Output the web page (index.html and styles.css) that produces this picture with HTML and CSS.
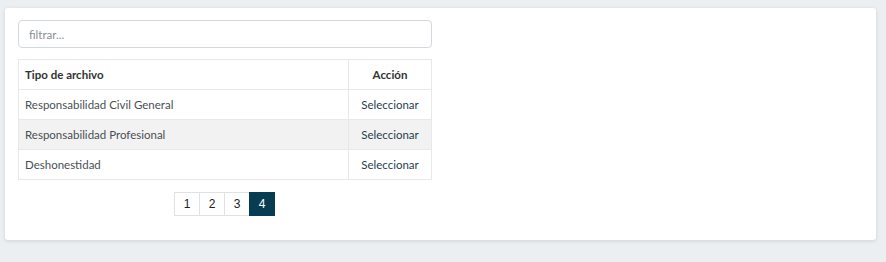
FILE: index.html
```html
<!DOCTYPE html>
<html lang="es">
<head>
<meta charset="utf-8">
<link rel="stylesheet" href="styles.css">
</head>
<body>
<div class="card">
  <div class="panel">
    <input class="filter" type="text" placeholder="filtrar...">
    <table class="grid">
      <thead>
        <tr><th class="col-tipo">Tipo de archivo</th><th class="col-accion">Acción</th></tr>
      </thead>
      <tbody>
        <tr><td>Responsabilidad Civil General</td><td class="col-accion"><a href="#">Seleccionar</a></td></tr>
        <tr class="alt"><td>Responsabilidad Profesional</td><td class="col-accion"><a href="#">Seleccionar</a></td></tr>
        <tr><td>Deshonestidad</td><td class="col-accion"><a href="#">Seleccionar</a></td></tr>
      </tbody>
    </table>
    <div class="pager">
      <a class="page" href="#">1</a><a class="page" href="#">2</a><a class="page" href="#">3</a><a class="page active" href="#">4</a>
    </div>
  </div>
</div>
</body>
</html>
```
FILE: styles.css
```css
html, body { margin: 0; padding: 0; }
body {
  background: #ebeff2;
  font-family: Lato, "Open Sans", sans-serif;
  font-size: 11.5px;
  color: #4a4f55;
  padding: 8px 10px 0 5px;
  height: 262px;
  box-sizing: border-box;
}
.card {
  background: #fff;
  border-radius: 3px;
  box-shadow: 0 1px 4px rgba(0,0,0,0.12);
  height: 232px;
  box-sizing: border-box;
  padding: 12px 13px;
}
.panel { width: 414px; }
.filter {
  display: block;
  width: 100%;
  height: 28px;
  box-sizing: border-box;
  border: 1px solid #d4d9de;
  border-radius: 4px;
  padding: 0 10px;
  font-family: inherit;
  font-size: 11.5px;
  color: #444;
  outline: none;
}
.filter::placeholder { color: #8a9095; }
.grid {
  margin-top: 11px;
  width: 100%;
  border-collapse: collapse;
  border: 1px solid #e6e9ec;
}
.grid th, .grid td {
  border: 1px solid #e6e9ec;
  height: 29px;
  padding: 0 6px;
  text-align: left;
  font-weight: normal;
  white-space: nowrap;
}
.grid th { font-weight: 700; color: #333; }
.grid .col-accion { text-align: center; width: 70px; }
.grid tr.alt td { background: #f2f2f2; }
.grid a { color: #1f3f4f; text-decoration: none; }
.pager {
  display: flex;
  justify-content: center;
  margin-top: 12px;
}
.page {
  display: flex;
  align-items: center;
  justify-content: center;
  width: 26px;
  height: 24px;
  box-sizing: border-box;
  border: 1px solid #dde2e6;
  margin-left: -1px;
  font-family: "Liberation Sans", Arial, sans-serif;
  font-size: 12px;
  color: #222;
  text-decoration: none;
  background: #fff;
}
.page.active { background: #073d52; color: #fff; border-color: #073d52; }
```
